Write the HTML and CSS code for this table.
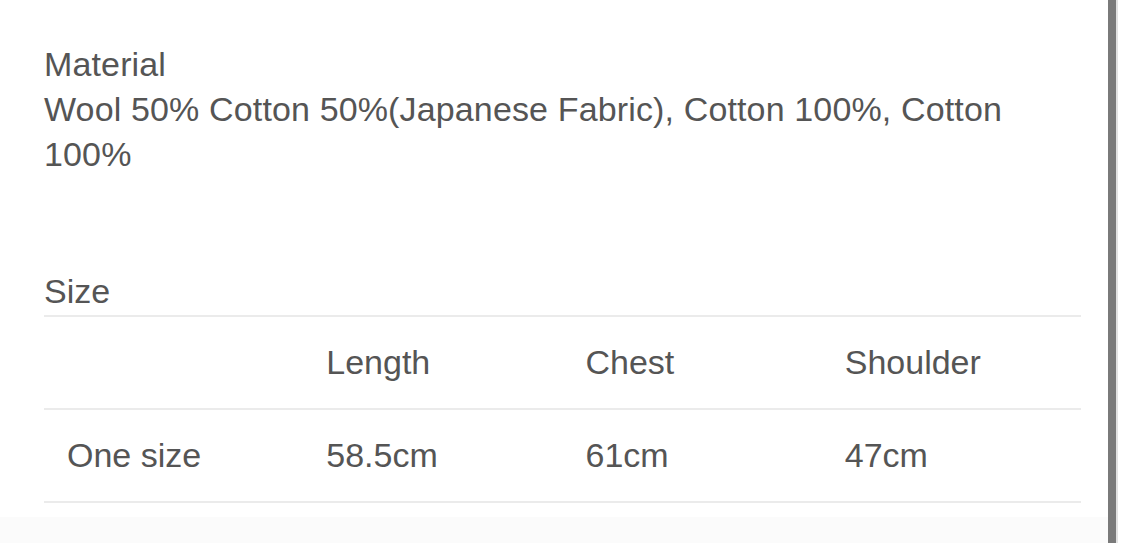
FILE: index.html
```html
<!DOCTYPE html>
<html lang="en">
<head>
    <meta charset="UTF-8">
    <meta name="viewport" content="width=device-width, initial-scale=1.0">
    <title>Product Details</title>
    <link rel="stylesheet" href="styles.css">
</head>
<body>
    <div class="page">
        <div class="content">
            <div class="material">
                <div>Material</div>
                <div>Wool 50% Cotton 50%(Japanese Fabric), Cotton 100%, Cotton 100%</div>
            </div>
            <div class="size-title">Size</div>
            <table class="size-table">
                <tr>
                    <td></td>
                    <td>Length</td>
                    <td>Chest</td>
                    <td>Shoulder</td>
                </tr>
                <tr>
                    <td>One size</td>
                    <td>58.5cm</td>
                    <td>61cm</td>
                    <td>47cm</td>
                </tr>
            </table>
            <div class="footer"></div>
        </div>
        <div class="scrollbar"></div>
        <div class="edge"></div>
    </div>
</body>
</html>
```

FILE: styles.css
```css
body {
    margin: 0;
    padding: 0;
    background-color: #fff;
    font-family: 'Liberation Sans', Arial, sans-serif;
    color: #555;
    overflow: hidden;
}
.page {
    display: flex;
    height: 543px;
}
.content {
    width: 1108px;
    display: flex;
    flex-direction: column;
}
.material {
    padding: 42px 0 0 44px;
    width: 980px;
    font-size: 34px;
    letter-spacing: 0.14px;
    line-height: 45px;
}
.size-title {
    padding: 92px 0 0 44px;
    font-size: 34px;
    line-height: 45px;
    height: 46px;
}
.size-table {
    margin-left: 44px;
    width: 1037px;
    border-collapse: collapse;
    table-layout: fixed;
    font-size: 34px;
    border-top: 2px solid #ebebeb;
}
.size-table td {
    height: 91px;
    padding: 0 0 0 23px;
    border-bottom: 2px solid #ebebeb;
    vertical-align: middle;
}
.footer {
    flex: 1;
    margin-top: 14px;
    background-color: #fbfbfb;
}
.scrollbar {
    width: 8px;
    background-color: #7a7a7a;
}
.edge {
    width: 2px;
    background-color: #e2e2e2;
}
```
